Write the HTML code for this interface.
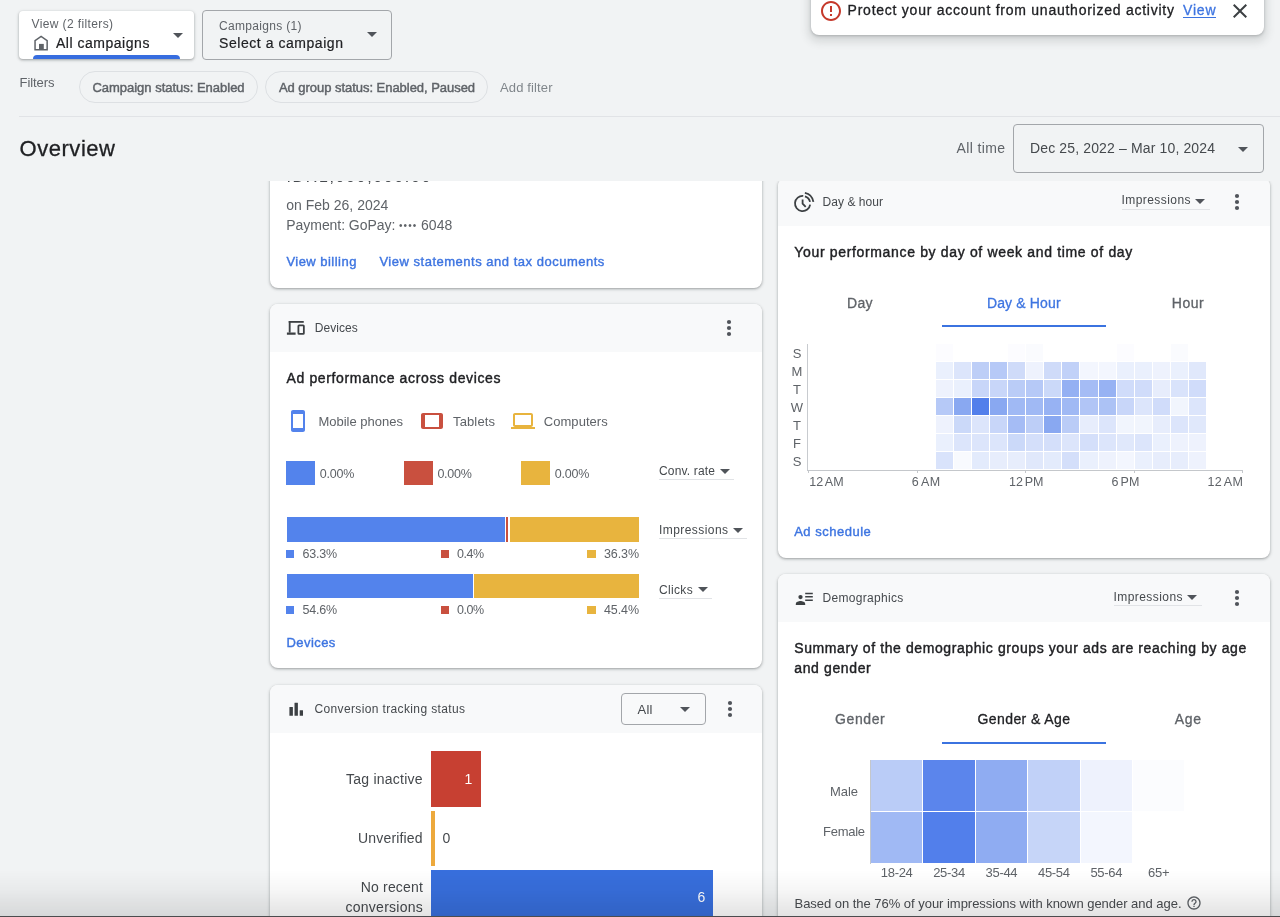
<!DOCTYPE html>
<html lang="en"><head><meta charset="utf-8"><title>Overview</title>
<style>
html,body{margin:0;padding:0}
body{width:1280px;height:917px;position:relative;overflow:hidden;background:#f1f3f4;font-family:"Liberation Sans",sans-serif}
.t{position:absolute;white-space:nowrap;line-height:1}
.g{position:absolute;left:0;top:0;width:1280px;height:917px;will-change:transform}
.a{position:absolute}
.card{position:absolute;background:#fff;border-radius:8px;box-shadow:0 1px 2px rgba(60,64,67,.3),0 1px 3px 1px rgba(60,64,67,.15)}
.hd{position:absolute;left:0;top:0;right:0;height:48px;background:#f8f9fa;border-radius:8px 8px 0 0}
.ul{position:absolute;height:1px;background:#e1e3e6}
svg{position:absolute;overflow:visible}
</style></head><body>

<!-- scrolling content (clipped at y=181) -->
<div class="a" style="left:0;top:181px;width:1280px;height:736px;overflow:hidden">
<div class="a" style="left:0;top:-181px;width:1280px;height:917px">

<!-- billing card -->
<div class="card" style="left:270px;top:60px;width:492px;height:228px"></div>

<!-- devices card -->
<div class="card" style="left:270px;top:304px;width:492px;height:364px"><div class="hd"></div></div>
<svg style="left:286px;top:320px" width="20" height="16" viewBox="0 0 20 16"><g fill="#3c4043"><rect x="2.750" y="1" width="15" height="1.800"/><rect x="2.750" y="1" width="1.850" height="11.600"/><rect x="0.900" y="12.500" width="8.700" height="2.250"/></g><rect x="12.400" y="5.300" width="5.450" height="8.550" rx="0.700" fill="none" stroke="#3c4043" stroke-width="1.800"/></svg>
<svg style="left:717.2px;top:316.3px" width="24" height="24" viewBox="0 0 24 24"><circle cx="12" cy="6" r="2.1" fill="#50545a"/><circle cx="12" cy="12" r="2.1" fill="#50545a"/><circle cx="12" cy="18" r="2.1" fill="#50545a"/></svg>
<!-- legend icons -->
<svg style="left:286.2px;top:408.9px" width="24" height="24" viewBox="0 0 24 24"><path fill="#5383ec" d="M17 1.01L7 1c-1.1 0-1.99.9-1.99 2v18c0 1.1.89 2 1.99 2h10c1.1 0 2-.9 2-2V3c0-1.1-.9-1.99-2-1.99zM17 19H7V5h10v14z"/></svg>
<svg style="left:420.25px;top:408.6px" width="24" height="24" viewBox="0 0 24 24"><path fill="#c9503f" d="M21 4H3c-1.1 0-1.99.9-1.99 2L1 18c0 1.1.9 2 2 2h18c1.1 0 1.99-.9 1.99-2L23 6c0-1.1-.9-2-2-2zm-2 14H5V6h14v12z"/></svg>
<svg style="left:511.25px;top:408.6px" width="24" height="24" viewBox="0 0 24 24"><path fill="#e8b43e" d="M20 18c1.1 0 1.99-.9 1.99-2L22 6c0-1.1-.9-2-2-2H4c-1.1 0-2 .9-2 2v10c0 1.1.9 2 2 2H0v2h24v-2h-4zM4 6h16v10H4V6z"/></svg>
<!-- conv rate squares -->
<div class="a" style="left:286.25px;top:461.25px;width:29px;height:24px;background:#5383ec"></div>
<div class="a" style="left:403.75px;top:461.25px;width:29.25px;height:24px;background:#c9503f"></div>
<div class="a" style="left:521.25px;top:461.25px;width:29px;height:24px;background:#e8b43e"></div>
<!-- bars -->
<div class="a" style="left:286.75px;top:517.2px;width:218.5px;height:24.8px;background:#5383ec"></div>
<div class="a" style="left:506.25px;top:517.2px;width:2px;height:24.8px;background:#c9503f"></div>
<div class="a" style="left:509.7px;top:517.2px;width:129.3px;height:24.8px;background:#e8b43e"></div>
<div class="a" style="left:286.75px;top:574px;width:185.9px;height:24px;background:#5383ec"></div>
<div class="a" style="left:473.7px;top:574px;width:165.3px;height:24px;background:#e8b43e"></div>
<!-- legend squares -->
<div class="a" style="left:286.25px;top:550px;width:7.75px;height:7.75px;background:#5383ec"></div>
<div class="a" style="left:440.75px;top:550px;width:7.75px;height:7.75px;background:#c9503f"></div>
<div class="a" style="left:587.2px;top:550px;width:8.5px;height:7.75px;background:#e8b43e"></div>
<div class="a" style="left:286.25px;top:606.4px;width:7.75px;height:7.75px;background:#5383ec"></div>
<div class="a" style="left:440.75px;top:606.4px;width:7.75px;height:7.75px;background:#c9503f"></div>
<div class="a" style="left:587.2px;top:606.4px;width:8.5px;height:7.75px;background:#e8b43e"></div>
<!-- dropdowns -->
<svg style="left:712.8px;top:458.8px" width="24" height="24" viewBox="0 0 24 24"><path d="M7 10l5 5 5-5z" fill="#50545a"/></svg>
<div class="ul" style="left:659px;top:479px;width:75px"></div>
<svg style="left:725.9px;top:518px" width="24" height="24" viewBox="0 0 24 24"><path d="M7 10l5 5 5-5z" fill="#50545a"/></svg>
<div class="ul" style="left:659px;top:538px;width:88px"></div>
<svg style="left:690.7px;top:577.3px" width="24" height="24" viewBox="0 0 24 24"><path d="M7 10l5 5 5-5z" fill="#50545a"/></svg>
<div class="ul" style="left:659px;top:597.5px;width:52.5px"></div>

<!-- conversion card -->
<div class="card" style="left:270px;top:685px;width:492px;height:400px"><div class="hd"></div></div>
<svg style="left:0;top:0" width="1280" height="917" viewBox="0 0 1280 917"><g fill="#3c4043"><rect x="289.400" y="706.900" width="3.500" height="8.900" rx="0.300"/><rect x="294.500" y="702.700" width="3.400" height="13.100" rx="0.300"/><rect x="299.700" y="710.200" width="3.300" height="5.600" rx="0.300"/></g></svg>
<div class="a" style="left:621px;top:693px;width:83px;height:30px;border:1px solid #a3a6aa;border-radius:4px"></div>
<svg style="left:673px;top:697px" width="24" height="24" viewBox="0 0 24 24"><path d="M7 10l5 5 5-5z" fill="#50545a"/></svg>
<svg style="left:717.7px;top:697px" width="24" height="24" viewBox="0 0 24 24"><circle cx="12" cy="6" r="2.1" fill="#50545a"/><circle cx="12" cy="12" r="2.1" fill="#50545a"/><circle cx="12" cy="18" r="2.1" fill="#50545a"/></svg>
<div class="a" style="left:431px;top:751.3px;width:49.5px;height:55.4px;background:#c74032"></div>
<div class="a" style="left:431px;top:810.6px;width:3.6px;height:55px;background:#eda93c"></div>
<div class="a" style="left:431px;top:870.1px;width:282.1px;height:55px;background:#386fdd"></div>

<!-- day & hour card -->
<div class="card" style="left:778px;top:178px;width:492px;height:380px"><div class="hd"></div></div>
<svg style="left:0;top:0" width="1280" height="917" viewBox="0 0 1280 917"><g fill="none" stroke="#3c4043" stroke-width="1.800"><path d="M810.130 204.560A7.600 7.600 0 1 1 803.260 195.930"/><path d="M804.950 196.270A7.600 7.600 0 0 1 810.030 201.920"/><path d="M804.870 192.840A10.900 10.900 0 0 1 813.390 201.980"/><path d="M802.600 199.500V203.700L805.700 206.900"/></g></svg>
<svg style="left:1188.3px;top:188.8px" width="24" height="24" viewBox="0 0 24 24"><path d="M7 10l5 5 5-5z" fill="#50545a"/></svg>
<div class="ul" style="left:1121.5px;top:208.5px;width:88px"></div>
<svg style="left:1225.4px;top:190px" width="24" height="24" viewBox="0 0 24 24"><circle cx="12" cy="6" r="2.1" fill="#50545a"/><circle cx="12" cy="12" r="2.1" fill="#50545a"/><circle cx="12" cy="18" r="2.1" fill="#50545a"/></svg>
<div class="a" style="left:941.5px;top:324.7px;width:164.2px;height:2.2px;background:#3b73e0"></div>
<div class="a" style="left:935.83px;top:344.00px;width:17.08px;height:17px;background:#fcfcff"></div>
<div class="a" style="left:1008.16px;top:344.00px;width:17.08px;height:17px;background:#fcfcff"></div>
<div class="a" style="left:1026.25px;top:344.00px;width:17.08px;height:17px;background:#fafbfe"></div>
<div class="a" style="left:1116.66px;top:344.00px;width:17.08px;height:17px;background:#fcfcff"></div>
<div class="a" style="left:1170.91px;top:344.00px;width:17.08px;height:17px;background:#fafbfe"></div>
<div class="a" style="left:935.83px;top:362.00px;width:17.08px;height:17px;background:#eaf0fd"></div>
<div class="a" style="left:953.91px;top:362.00px;width:17.08px;height:17px;background:#dce5fb"></div>
<div class="a" style="left:972.00px;top:362.00px;width:17.08px;height:17px;background:#bdcef7"></div>
<div class="a" style="left:990.08px;top:362.00px;width:17.08px;height:17px;background:#b6c9f7"></div>
<div class="a" style="left:1008.16px;top:362.00px;width:17.08px;height:17px;background:#cfdbf9"></div>
<div class="a" style="left:1026.25px;top:362.00px;width:17.08px;height:17px;background:#eef2fd"></div>
<div class="a" style="left:1044.33px;top:362.00px;width:17.08px;height:17px;background:#cfdbf9"></div>
<div class="a" style="left:1062.41px;top:362.00px;width:17.08px;height:17px;background:#c1d1f8"></div>
<div class="a" style="left:1080.49px;top:362.00px;width:17.08px;height:17px;background:#f3f6fe"></div>
<div class="a" style="left:1098.58px;top:362.00px;width:17.08px;height:17px;background:#f3f6fe"></div>
<div class="a" style="left:1116.66px;top:362.00px;width:17.08px;height:17px;background:#eaf0fd"></div>
<div class="a" style="left:1134.74px;top:362.00px;width:17.08px;height:17px;background:#eaf0fd"></div>
<div class="a" style="left:1152.83px;top:362.00px;width:17.08px;height:17px;background:#eef2fd"></div>
<div class="a" style="left:1170.91px;top:362.00px;width:17.08px;height:17px;background:#eaf0fd"></div>
<div class="a" style="left:1188.99px;top:362.00px;width:17.08px;height:17px;background:#e0e8fb"></div>
<div class="a" style="left:935.83px;top:380.00px;width:17.08px;height:17px;background:#eef2fd"></div>
<div class="a" style="left:953.91px;top:380.00px;width:17.08px;height:17px;background:#eaf0fd"></div>
<div class="a" style="left:972.00px;top:380.00px;width:17.08px;height:17px;background:#c8d6f9"></div>
<div class="a" style="left:990.08px;top:380.00px;width:17.08px;height:17px;background:#c8d6f9"></div>
<div class="a" style="left:1008.16px;top:380.00px;width:17.08px;height:17px;background:#baccf7"></div>
<div class="a" style="left:1026.25px;top:380.00px;width:17.08px;height:17px;background:#b6c9f7"></div>
<div class="a" style="left:1044.33px;top:380.00px;width:17.08px;height:17px;background:#cbd9f9"></div>
<div class="a" style="left:1062.41px;top:380.00px;width:17.08px;height:17px;background:#94b0f3"></div>
<div class="a" style="left:1080.49px;top:380.00px;width:17.08px;height:17px;background:#a5bcf5"></div>
<div class="a" style="left:1098.58px;top:380.00px;width:17.08px;height:17px;background:#97b2f3"></div>
<div class="a" style="left:1116.66px;top:380.00px;width:17.08px;height:17px;background:#d0dcfa"></div>
<div class="a" style="left:1134.74px;top:380.00px;width:17.08px;height:17px;background:#d0dcfa"></div>
<div class="a" style="left:1152.83px;top:380.00px;width:17.08px;height:17px;background:#e7edfc"></div>
<div class="a" style="left:1170.91px;top:380.00px;width:17.08px;height:17px;background:#d9e3fb"></div>
<div class="a" style="left:1188.99px;top:380.00px;width:17.08px;height:17px;background:#d0dcfa"></div>
<div class="a" style="left:935.83px;top:398.00px;width:17.08px;height:17px;background:#b6c9f7"></div>
<div class="a" style="left:953.91px;top:398.00px;width:17.08px;height:17px;background:#89a8f1"></div>
<div class="a" style="left:972.00px;top:398.00px;width:17.08px;height:17px;background:#527feb"></div>
<div class="a" style="left:990.08px;top:398.00px;width:17.08px;height:17px;background:#89a8f1"></div>
<div class="a" style="left:1008.16px;top:398.00px;width:17.08px;height:17px;background:#a0b9f4"></div>
<div class="a" style="left:1026.25px;top:398.00px;width:17.08px;height:17px;background:#a0b9f4"></div>
<div class="a" style="left:1044.33px;top:398.00px;width:17.08px;height:17px;background:#97b2f3"></div>
<div class="a" style="left:1062.41px;top:398.00px;width:17.08px;height:17px;background:#a0b9f4"></div>
<div class="a" style="left:1080.49px;top:398.00px;width:17.08px;height:17px;background:#b1c5f6"></div>
<div class="a" style="left:1098.58px;top:398.00px;width:17.08px;height:17px;background:#acc2f5"></div>
<div class="a" style="left:1116.66px;top:398.00px;width:17.08px;height:17px;background:#c8d6f9"></div>
<div class="a" style="left:1134.74px;top:398.00px;width:17.08px;height:17px;background:#dce5fb"></div>
<div class="a" style="left:1152.83px;top:398.00px;width:17.08px;height:17px;background:#d0dcfa"></div>
<div class="a" style="left:1170.91px;top:398.00px;width:17.08px;height:17px;background:#f1f5fd"></div>
<div class="a" style="left:1188.99px;top:398.00px;width:17.08px;height:17px;background:#dce5fb"></div>
<div class="a" style="left:935.83px;top:416.00px;width:17.08px;height:17px;background:#eef2fd"></div>
<div class="a" style="left:953.91px;top:416.00px;width:17.08px;height:17px;background:#cbd9f9"></div>
<div class="a" style="left:972.00px;top:416.00px;width:17.08px;height:17px;background:#dce5fb"></div>
<div class="a" style="left:990.08px;top:416.00px;width:17.08px;height:17px;background:#c8d6f9"></div>
<div class="a" style="left:1008.16px;top:416.00px;width:17.08px;height:17px;background:#a5bcf5"></div>
<div class="a" style="left:1026.25px;top:416.00px;width:17.08px;height:17px;background:#bdcef7"></div>
<div class="a" style="left:1044.33px;top:416.00px;width:17.08px;height:17px;background:#89a8f1"></div>
<div class="a" style="left:1062.41px;top:416.00px;width:17.08px;height:17px;background:#baccf7"></div>
<div class="a" style="left:1080.49px;top:416.00px;width:17.08px;height:17px;background:#e7edfc"></div>
<div class="a" style="left:1098.58px;top:416.00px;width:17.08px;height:17px;background:#dce5fb"></div>
<div class="a" style="left:1116.66px;top:416.00px;width:17.08px;height:17px;background:#f1f5fd"></div>
<div class="a" style="left:1134.74px;top:416.00px;width:17.08px;height:17px;background:#f1f5fd"></div>
<div class="a" style="left:1152.83px;top:416.00px;width:17.08px;height:17px;background:#e7edfc"></div>
<div class="a" style="left:1170.91px;top:416.00px;width:17.08px;height:17px;background:#dce5fb"></div>
<div class="a" style="left:1188.99px;top:416.00px;width:17.08px;height:17px;background:#e0e8fb"></div>
<div class="a" style="left:935.83px;top:434.00px;width:17.08px;height:17px;background:#eaf0fd"></div>
<div class="a" style="left:953.91px;top:434.00px;width:17.08px;height:17px;background:#dce5fb"></div>
<div class="a" style="left:972.00px;top:434.00px;width:17.08px;height:17px;background:#dce5fb"></div>
<div class="a" style="left:990.08px;top:434.00px;width:17.08px;height:17px;background:#dce5fb"></div>
<div class="a" style="left:1008.16px;top:434.00px;width:17.08px;height:17px;background:#cbd9f9"></div>
<div class="a" style="left:1026.25px;top:434.00px;width:17.08px;height:17px;background:#d4dffa"></div>
<div class="a" style="left:1044.33px;top:434.00px;width:17.08px;height:17px;background:#d4dffa"></div>
<div class="a" style="left:1062.41px;top:434.00px;width:17.08px;height:17px;background:#dce5fb"></div>
<div class="a" style="left:1080.49px;top:434.00px;width:17.08px;height:17px;background:#d4dffa"></div>
<div class="a" style="left:1098.58px;top:434.00px;width:17.08px;height:17px;background:#dce5fb"></div>
<div class="a" style="left:1116.66px;top:434.00px;width:17.08px;height:17px;background:#e0e8fb"></div>
<div class="a" style="left:1134.74px;top:434.00px;width:17.08px;height:17px;background:#dce5fb"></div>
<div class="a" style="left:1152.83px;top:434.00px;width:17.08px;height:17px;background:#eaf0fd"></div>
<div class="a" style="left:1170.91px;top:434.00px;width:17.08px;height:17px;background:#eef2fd"></div>
<div class="a" style="left:1188.99px;top:434.00px;width:17.08px;height:17px;background:#eef2fd"></div>
<div class="a" style="left:935.83px;top:452.00px;width:17.08px;height:17px;background:#d9e3fb"></div>
<div class="a" style="left:953.91px;top:452.00px;width:17.08px;height:17px;background:#f8fafe"></div>
<div class="a" style="left:972.00px;top:452.00px;width:17.08px;height:17px;background:#e3ebfc"></div>
<div class="a" style="left:990.08px;top:452.00px;width:17.08px;height:17px;background:#e7edfc"></div>
<div class="a" style="left:1008.16px;top:452.00px;width:17.08px;height:17px;background:#e7edfc"></div>
<div class="a" style="left:1026.25px;top:452.00px;width:17.08px;height:17px;background:#e0e8fb"></div>
<div class="a" style="left:1044.33px;top:452.00px;width:17.08px;height:17px;background:#e3ebfc"></div>
<div class="a" style="left:1062.41px;top:452.00px;width:17.08px;height:17px;background:#d4dffa"></div>
<div class="a" style="left:1080.49px;top:452.00px;width:17.08px;height:17px;background:#eaf0fd"></div>
<div class="a" style="left:1098.58px;top:452.00px;width:17.08px;height:17px;background:#eef2fd"></div>
<div class="a" style="left:1116.66px;top:452.00px;width:17.08px;height:17px;background:#f3f6fe"></div>
<div class="a" style="left:1134.74px;top:452.00px;width:17.08px;height:17px;background:#eaf0fd"></div>
<div class="a" style="left:1152.83px;top:452.00px;width:17.08px;height:17px;background:#e7edfc"></div>
<div class="a" style="left:1170.91px;top:452.00px;width:17.08px;height:17px;background:#e7edfc"></div>
<div class="a" style="left:1188.99px;top:452.00px;width:17.08px;height:17px;background:#eef2fd"></div>
<div class="a" style="left:807.3px;top:344px;width:1px;height:126px;background:#c8cbcf"></div>
<div class="a" style="left:807.4px;top:469.6px;width:436px;height:1.2px;background:#c4c7cb"></div>
<div class="a" style="left:808.15px;top:470px;width:1.2px;height:3.4px;background:#c4c7cb"></div>
<div class="a" style="left:916.65px;top:470px;width:1.2px;height:3.4px;background:#c4c7cb"></div>
<div class="a" style="left:1025.15px;top:470px;width:1.2px;height:3.4px;background:#c4c7cb"></div>
<div class="a" style="left:1133.64px;top:470px;width:1.2px;height:3.4px;background:#c4c7cb"></div>
<div class="a" style="left:1242.14px;top:470px;width:1.2px;height:3.4px;background:#c4c7cb"></div>

<!-- demographics card -->
<div class="card" style="left:778px;top:574px;width:492px;height:500px"><div class="hd"></div></div>
<svg style="left:0;top:0" width="1280" height="917" viewBox="0 0 1280 917"><circle cx="800.5" cy="597.1" r="2.15" fill="#3c4043"/><path d="M795.8 604.9v-0.9c0-2 2.9-2.9 4.7-2.9s4.7 0.900 4.700 2.900v0.900z" fill="#3c4043"/><path d="M805.200 593.400h7.600M805.200 596.800h7.600M805.200 600.200h7.600" stroke="#3c4043" stroke-width="1.500" fill="none"/></svg>
<svg style="left:1180.3px;top:585.1px" width="24" height="24" viewBox="0 0 24 24"><path d="M7 10l5 5 5-5z" fill="#50545a"/></svg>
<div class="ul" style="left:1113.5px;top:604.5px;width:88px"></div>
<svg style="left:1225.4px;top:586.3px" width="24" height="24" viewBox="0 0 24 24"><circle cx="12" cy="6" r="2.1" fill="#50545a"/><circle cx="12" cy="12" r="2.1" fill="#50545a"/><circle cx="12" cy="18" r="2.1" fill="#50545a"/></svg>
<div class="a" style="left:941.5px;top:741.5px;width:164.2px;height:2.1px;background:#3b73e0"></div>
<div class="a" style="left:870.90px;top:759.80px;width:51.5px;height:51.2px;background:#baccf7"></div>
<div class="a" style="left:923.30px;top:759.80px;width:51.5px;height:51.2px;background:#5b85ec"></div>
<div class="a" style="left:975.70px;top:759.80px;width:51.5px;height:51.2px;background:#8facf2"></div>
<div class="a" style="left:1028.10px;top:759.80px;width:51.5px;height:51.2px;background:#c1d1f8"></div>
<div class="a" style="left:1080.50px;top:759.80px;width:51.5px;height:51.2px;background:#eef2fd"></div>
<div class="a" style="left:1132.90px;top:759.80px;width:51.5px;height:51.2px;background:#fbfcfe"></div>
<div class="a" style="left:870.90px;top:811.80px;width:51.5px;height:51.2px;background:#a0b9f4"></div>
<div class="a" style="left:923.30px;top:811.80px;width:51.5px;height:51.2px;background:#527feb"></div>
<div class="a" style="left:975.70px;top:811.80px;width:51.5px;height:51.2px;background:#8facf2"></div>
<div class="a" style="left:1028.10px;top:811.80px;width:51.5px;height:51.2px;background:#c6d5f8"></div>
<div class="a" style="left:1080.50px;top:811.80px;width:51.5px;height:51.2px;background:#f3f6fe"></div>
<div class="a" style="left:869.8px;top:759.5px;width:1px;height:104px;background:#c4c7cb"></div>
<svg style="left:1186px;top:895.2px" width="16" height="16" viewBox="0 0 24 24"><path fill="#5f6368" d="M11 18h2v-2h-2v2zm1-16C6.48 2 2 6.48 2 12s4.48 10 10 10 10-4.48 10-10S17.52 2 12 2zm0 18c-4.41 0-8-3.59-8-8s3.59-8 8-8 8 3.59 8 8-3.59 8-8 8zm0-14c-2.21 0-4 1.79-4 4h2c0-1.1.9-2 2-2s2 .9 2 2c0 2-3 1.75-3 5h2c0-2.25 3-2.5 3-5 0-2.21-1.790-4-4-4z"/></svg>

<div class="g">
<span class="t" style="font-size:16px;color:#45494d;top:169px;left:286.40px;letter-spacing:1.644px;">IDR1,000,000.00</span>
<span class="t" style="font-size:14px;color:#5f6368;top:198px;left:286.30px;letter-spacing:0.001px;">on Feb 26, 2024</span>
<span class="t" style="font-size:14px;color:#5f6368;top:218px;left:286.30px;letter-spacing:-0.051px;">Payment: GoPay:</span>
<span class="t" style="font-size:10px;color:#5f6368;top:221px;left:398.90px;letter-spacing:1.128px;">••••</span>
<span class="t" style="font-size:14px;color:#5f6368;top:218px;left:421.00px;letter-spacing:0.048px;">6048</span>
<span class="t" style="font-size:13px;color:#3e75e1;top:255px;left:286.40px;letter-spacing:0.473px;-webkit-text-stroke:0.4px #3e75e1;">View billing</span>
<span class="t" style="font-size:13px;color:#3e75e1;top:255px;left:379.40px;letter-spacing:0.512px;-webkit-text-stroke:0.4px #3e75e1;">View statements and tax documents</span>
<span class="t" style="font-size:12px;color:#45494d;top:322px;left:314.75px;letter-spacing:0.052px;">Devices</span>
<span class="t" style="font-size:14px;color:#202124;top:371px;left:286.50px;letter-spacing:0.640px;-webkit-text-stroke:0.4px #202124;">Ad performance across devices</span>
<span class="t" style="font-size:13px;color:#5f6368;top:415px;left:318.40px;letter-spacing:-0.005px;">Mobile phones</span>
<span class="t" style="font-size:13px;color:#5f6368;top:415px;left:453.00px;letter-spacing:0.133px;">Tablets</span>
<span class="t" style="font-size:13px;color:#5f6368;top:415px;left:543.75px;letter-spacing:0.053px;">Computers</span>
<span class="t" style="font-size:12.5px;color:#5f6368;top:468px;left:319.75px;letter-spacing:-0.238px;">0.00%</span>
<span class="t" style="font-size:12.5px;color:#5f6368;top:468px;left:437.40px;letter-spacing:-0.238px;">0.00%</span>
<span class="t" style="font-size:12.5px;color:#5f6368;top:468px;left:554.80px;letter-spacing:-0.238px;">0.00%</span>
<span class="t" style="font-size:12.5px;color:#5f6368;top:548px;left:302.50px;letter-spacing:-0.238px;">63.3%</span>
<span class="t" style="font-size:12.5px;color:#5f6368;top:548px;left:457.00px;letter-spacing:-0.500px;">0.4%</span>
<span class="t" style="font-size:12.5px;color:#5f6368;top:548px;left:604.00px;letter-spacing:-0.113px;">36.3%</span>
<span class="t" style="font-size:12.5px;color:#5f6368;top:604px;left:302.50px;letter-spacing:-0.238px;">54.6%</span>
<span class="t" style="font-size:12.5px;color:#5f6368;top:604px;left:457.00px;letter-spacing:-0.500px;">0.0%</span>
<span class="t" style="font-size:12.5px;color:#5f6368;top:604px;left:604.00px;letter-spacing:-0.113px;">45.4%</span>
<span class="t" style="font-size:12px;color:#45494d;top:465px;left:659.00px;letter-spacing:0.170px;">Conv. rate</span>
<span class="t" style="font-size:12px;color:#45494d;top:524px;left:659.00px;letter-spacing:0.431px;">Impressions</span>
<span class="t" style="font-size:12px;color:#45494d;top:584px;left:659.00px;letter-spacing:0.340px;">Clicks</span>
<span class="t" style="font-size:13px;color:#3e75e1;top:636px;left:286.40px;letter-spacing:0.458px;-webkit-text-stroke:0.4px #3e75e1;">Devices</span>
<span class="t" style="font-size:12px;color:#45494d;top:703px;left:314.40px;letter-spacing:0.368px;">Conversion tracking status</span>
<span class="t" style="font-size:13px;color:#45494d;top:703px;left:637.60px;letter-spacing:0.123px;">All</span>
<span class="t" style="font-size:14px;color:#45494d;top:772px;left:346.00px;letter-spacing:0.233px;">Tag inactive</span>
<span class="t" style="font-size:14px;color:#fff;top:772px;left:464.60px;">1</span>
<span class="t" style="font-size:14px;color:#45494d;top:831px;left:358.00px;letter-spacing:0.174px;">Unverified</span>
<span class="t" style="font-size:14px;color:#45494d;top:831px;left:442.40px;">0</span>
<span class="t" style="font-size:14px;color:#45494d;top:880px;left:360.80px;letter-spacing:0.162px;">No recent</span>
<span class="t" style="font-size:14px;color:#45494d;top:900px;left:345.50px;letter-spacing:0.260px;">conversions</span>
<span class="t" style="font-size:14px;color:#fff;top:890px;left:697.50px;">6</span>
<span class="t" style="font-size:12px;color:#45494d;top:196px;left:822.50px;letter-spacing:0.052px;">Day &amp; hour</span>
<span class="t" style="font-size:12px;color:#45494d;top:194px;left:1121.50px;letter-spacing:0.431px;">Impressions</span>
<span class="t" style="font-size:14px;color:#202124;top:245px;left:794.30px;letter-spacing:0.659px;-webkit-text-stroke:0.4px #202124;">Your performance by day of week and time of day</span>
<span class="t" style="font-size:14px;color:#5f6368;top:296px;left:847.00px;letter-spacing:0.297px;-webkit-text-stroke:0.3px #5f6368;">Day</span>
<span class="t" style="font-size:14px;color:#3e75e1;top:296px;left:986.90px;letter-spacing:0.149px;-webkit-text-stroke:0.3px #3e75e1;">Day &amp; Hour</span>
<span class="t" style="font-size:14px;color:#5f6368;top:296px;left:1171.80px;letter-spacing:0.547px;-webkit-text-stroke:0.3px #5f6368;">Hour</span>
<span class="t" style="font-size:13px;color:#3e75e1;top:525px;left:794.20px;letter-spacing:0.504px;-webkit-text-stroke:0.4px #3e75e1;">Ad schedule</span>
<span class="t" style="font-size:13px;color:#5f6368;top:347px;left:797.00px;transform:translateX(-50%);">S</span>
<span class="t" style="font-size:13px;color:#5f6368;top:365px;left:797.00px;transform:translateX(-50%);">M</span>
<span class="t" style="font-size:13px;color:#5f6368;top:383px;left:797.00px;transform:translateX(-50%);">T</span>
<span class="t" style="font-size:13px;color:#5f6368;top:401px;left:797.00px;transform:translateX(-50%);">W</span>
<span class="t" style="font-size:13px;color:#5f6368;top:419px;left:797.00px;transform:translateX(-50%);">T</span>
<span class="t" style="font-size:13px;color:#5f6368;top:437px;left:797.00px;transform:translateX(-50%);">F</span>
<span class="t" style="font-size:13px;color:#5f6368;top:455px;left:797.00px;transform:translateX(-50%);">S</span>
<span class="t" style="font-size:12.5px;color:#5f6368;top:476px;left:809.20px;letter-spacing:0.141px;word-spacing:-1.5px;">12 AM</span>
<span class="t" style="font-size:12.5px;color:#5f6368;top:476px;left:911.80px;letter-spacing:0.467px;word-spacing:-1.5px;">6 AM</span>
<span class="t" style="font-size:12.5px;color:#5f6368;top:476px;left:1009.10px;letter-spacing:-0.085px;word-spacing:-1.5px;">12 PM</span>
<span class="t" style="font-size:12.5px;color:#5f6368;top:476px;left:1111.50px;letter-spacing:0.038px;word-spacing:-1.5px;">6 PM</span>
<span class="t" style="font-size:12.5px;color:#5f6368;top:476px;left:1207.40px;letter-spacing:0.366px;word-spacing:-1.5px;">12 AM</span>
<span class="t" style="font-size:12px;color:#45494d;top:592px;left:822.50px;letter-spacing:0.307px;">Demographics</span>
<span class="t" style="font-size:12px;color:#45494d;top:591px;left:1113.50px;letter-spacing:0.431px;">Impressions</span>
<span class="t" style="font-size:14px;color:#202124;top:641px;left:794.25px;letter-spacing:0.597px;-webkit-text-stroke:0.4px #202124;">Summary of the demographic groups your ads are reaching by age</span>
<span class="t" style="font-size:14px;color:#202124;top:661px;left:794.25px;letter-spacing:0.628px;-webkit-text-stroke:0.4px #202124;">and gender</span>
<span class="t" style="font-size:14px;color:#5f6368;top:712px;left:835.00px;letter-spacing:0.609px;-webkit-text-stroke:0.3px #5f6368;">Gender</span>
<span class="t" style="font-size:14px;color:#202124;top:712px;left:977.50px;letter-spacing:0.413px;-webkit-text-stroke:0.3px #202124;">Gender &amp; Age</span>
<span class="t" style="font-size:14px;color:#5f6368;top:712px;left:1174.80px;letter-spacing:0.639px;-webkit-text-stroke:0.3px #5f6368;">Age</span>
<span class="t" style="font-size:13px;color:#5f6368;top:785px;left:830.00px;letter-spacing:-0.062px;">Male</span>
<span class="t" style="font-size:13px;color:#5f6368;top:825px;left:823.00px;letter-spacing:-0.272px;">Female</span>
<span class="t" style="font-size:13px;color:#5f6368;top:866px;left:880.80px;letter-spacing:-0.312px;">18-24</span>
<span class="t" style="font-size:13px;color:#5f6368;top:866px;left:933.20px;letter-spacing:-0.312px;">25-34</span>
<span class="t" style="font-size:13px;color:#5f6368;top:866px;left:985.60px;letter-spacing:-0.312px;">35-44</span>
<span class="t" style="font-size:13px;color:#5f6368;top:866px;left:1038.00px;letter-spacing:-0.312px;">45-54</span>
<span class="t" style="font-size:13px;color:#5f6368;top:866px;left:1090.40px;letter-spacing:-0.312px;">55-64</span>
<span class="t" style="font-size:13px;color:#5f6368;top:866px;left:1148.00px;letter-spacing:-0.281px;">65+</span>
<span class="t" style="font-size:13px;color:#4a4d51;top:897px;left:794.50px;letter-spacing:-0.029px;">Based on the 76% of your impressions with known gender and age.</span>
</div>
</div></div>

<!-- top bar -->
<div class="a" style="left:19px;top:11px;width:175.3px;height:48.4px;background:#fff;border-radius:4px;box-shadow:0 1px 2px rgba(60,64,67,.3),0 1px 3px 1px rgba(60,64,67,.15);overflow:hidden"><div class="a" style="left:14px;top:44px;width:147px;height:10px;border-radius:4px 4px 0 0;background:#376ddf"></div></div>
<svg style="left:30px;top:32px" width="22" height="22" viewBox="30 32 22 22"><path d="M35.050 49.850V40.700L41.100 36.500L47.150 40.700V49.850Z" fill="none" stroke="#5f6368" stroke-width="1.500"/><rect x="39" y="43.900" width="4.800" height="6" fill="#5f6368"/></svg>
<svg style="left:166.25px;top:22.5px" width="24" height="24" viewBox="0 0 24 24"><path d="M7 10l5 5 5-5z" fill="#50545a"/></svg>
<div class="a" style="left:202px;top:10.3px;width:188.2px;height:47.4px;border:1px solid #a3a6aa;border-radius:4px"></div>
<svg style="left:359.5px;top:22.2px" width="24" height="24" viewBox="0 0 24 24"><path d="M7 10l5 5 5-5z" fill="#50545a"/></svg>
<div class="a" style="left:79px;top:71.2px;width:176.5px;height:29.6px;border:1px solid #dde0e3;border-radius:16px"></div>
<div class="a" style="left:265px;top:71.2px;width:220.5px;height:29.6px;border:1px solid #dde0e3;border-radius:16px"></div>
<div class="a" style="left:19px;top:115.5px;width:1261px;height:1px;background:#e1e3e6"></div>
<div class="a" style="left:1013.3px;top:124.3px;width:248.9px;height:47.2px;border:1px solid #a3a6aa;border-radius:4px"></div>
<svg style="left:1231.3px;top:136.7px" width="24" height="24" viewBox="0 0 24 24"><path d="M7 10l5 5 5-5z" fill="#50545a"/></svg>

<!-- banner -->
<div class="a" style="left:811px;top:-20px;width:453px;height:54.5px;background:#fff;border-radius:8px;box-shadow:0 1px 3px rgba(60,64,67,.3),0 4px 8px 3px rgba(60,64,67,.15)"></div>
<svg style="left:818.7px;top:-1px" width="24" height="24" viewBox="0 0 24 24"><path fill="#c5392b" d="M11 15h2v2h-2zm0-8h2v6h-2zm.99-5C6.47 2 2 6.48 2 12s4.47 10 9.99 10C17.52 22 22 17.52 22 12S17.52 2 11.99 2zM12 20c-4.42 0-8-3.580-8-8s3.580-8 8-8 8 3.580 8 8-3.580 8-8 8z"/></svg>
<svg style="left:1228px;top:-1px" width="24" height="24" viewBox="0 0 24 24"><path fill="#3c4043" d="M19 6.410L17.590 5 12 10.590 6.410 5 5 6.410 10.590 12 5 17.590 6.410 19 12 13.410 17.590 19 19 17.590 13.410 12z"/></svg>
<div class="a" style="left:1183px;top:16.5px;width:32.5px;height:1.1px;background:#3b73e0"></div>

<div class="g">
<span class="t" style="font-size:12px;color:#5f6368;top:18px;left:31.50px;letter-spacing:0.387px;">View (2 filters)</span>
<span class="t" style="font-size:14px;color:#202124;top:36px;left:55.90px;letter-spacing:0.529px;-webkit-text-stroke:0.2px #202124;">All campaigns</span>
<span class="t" style="font-size:12px;color:#5f6368;top:20px;left:219.00px;letter-spacing:0.316px;">Campaigns (1)</span>
<span class="t" style="font-size:14px;color:#202124;top:36px;left:219.00px;letter-spacing:0.551px;-webkit-text-stroke:0.2px #202124;">Select a campaign</span>
<span class="t" style="font-size:13px;color:#5f6368;top:76px;left:19.50px;letter-spacing:-0.065px;">Filters</span>
<span class="t" style="font-size:13px;color:#5f6368;top:81px;left:92.40px;letter-spacing:-0.012px;-webkit-text-stroke:0.45px #5f6368;">Campaign status: Enabled</span>
<span class="t" style="font-size:13px;color:#5f6368;top:81px;left:278.90px;letter-spacing:-0.036px;-webkit-text-stroke:0.45px #5f6368;">Ad group status: Enabled, Paused</span>
<span class="t" style="font-size:13px;color:#80868b;top:81px;left:500.00px;letter-spacing:0.132px;">Add filter</span>
<span class="t" style="font-size:22px;color:#202124;top:138px;left:19.50px;letter-spacing:0.545px;-webkit-text-stroke:0.3px #202124;">Overview</span>
<span class="t" style="font-size:14px;color:#5f6368;top:141px;left:956.50px;letter-spacing:0.371px;">All time</span>
<span class="t" style="font-size:14px;color:#45494d;top:141px;left:1030.00px;letter-spacing:0.141px;">Dec 25, 2022 – Mar 10, 2024</span>
<span class="t" style="font-size:14px;color:#202124;top:3px;left:847.60px;letter-spacing:0.752px;-webkit-text-stroke:0.3px #202124;">Protect your account from unauthorized activity</span>
<span class="t" style="font-size:14px;color:#3e75e1;top:3px;left:1183.00px;letter-spacing:0.802px;-webkit-text-stroke:0.3px #3e75e1;">View</span>
</div>

<!-- bottom fade + edge -->
<div class="a" style="left:0;top:870px;width:1280px;height:46px;background:linear-gradient(to bottom,rgba(0,0,0,0) 0%,rgba(0,0,0,.035) 45%,rgba(0,0,0,.11) 100%)"></div>
<div class="a" style="left:0;top:915.5px;width:1280px;height:1.5px;background:#4b4c4e"></div>
</body></html>
